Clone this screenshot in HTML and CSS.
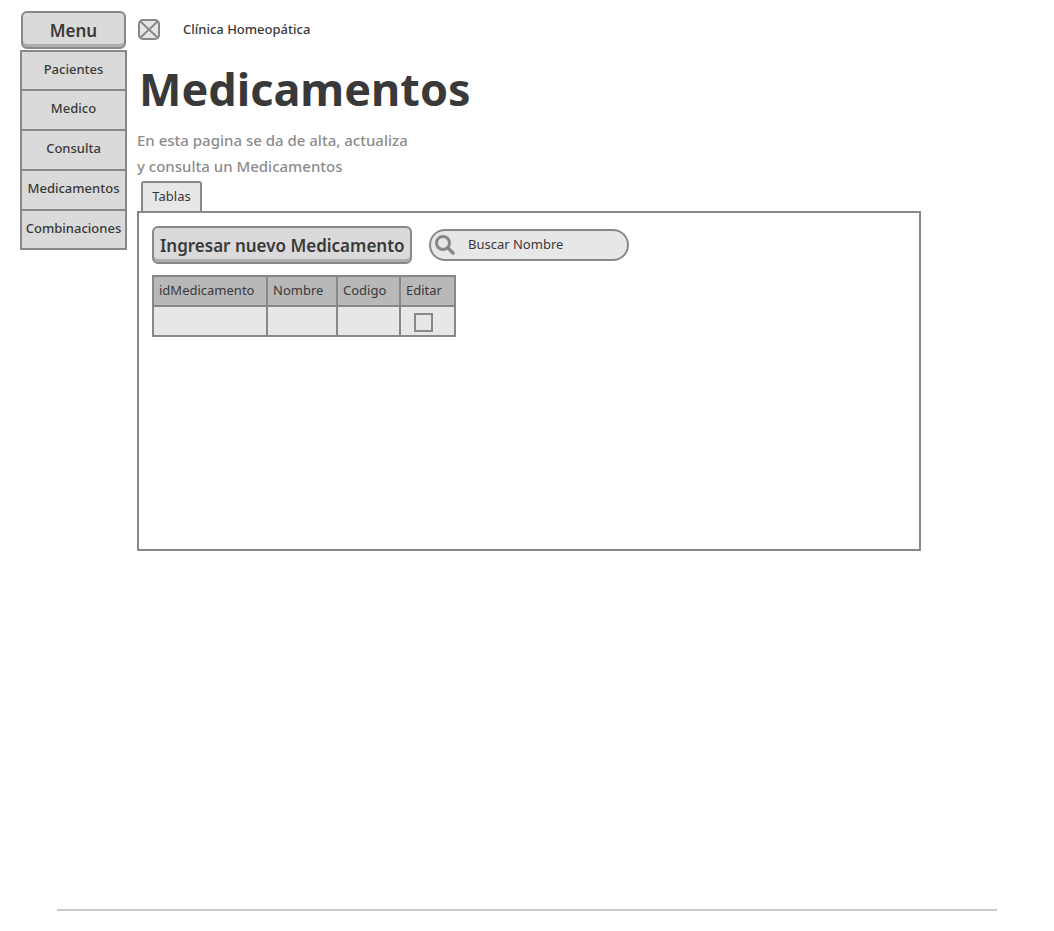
FILE: index.html
```html
<!DOCTYPE html>
<html lang="es">
<head>
<meta charset="utf-8">
<meta name="viewport" content="width=device-width, initial-scale=1">
<title>Clínica Homeopática - Medicamentos</title>
<link rel="stylesheet" href="styles.css">
</head>
<body>
<div class="layout">
  <aside class="sidebar">
    <button type="button" class="button menu-button">Menu</button>
    <nav class="nav" aria-label="Menu">
      <a href="#pacientes">Pacientes</a>
      <a href="#medico">Medico</a>
      <a href="#consulta">Consulta</a>
      <a href="#medicamentos">Medicamentos</a>
      <a href="#combinaciones">Combinaciones</a>
    </nav>
  </aside>
  <main class="main">
    <header class="brand">
      <svg class="logo" viewBox="0 0 22 21" aria-hidden="true">
        <rect x="1" y="1" width="20" height="19" rx="4" fill="#e6e6e6" stroke="#888" stroke-width="2"/>
        <path d="M2 2 20 19M20 2 2 19" stroke="#888" stroke-width="2"/>
      </svg>
      <span>Clínica Homeopática</span>
    </header>
    <h1 class="title">Medicamentos</h1>
    <p class="intro">En esta pagina se da de alta, actualiza<br>y consulta un Medicamentos</p>
    <button type="button" class="tab">Tablas</button>
    <section class="panel">
      <div class="toolbar">
        <button type="button" class="button">Ingresar nuevo Medicamento</button>
        <label class="search">
          <svg class="search-icon" viewBox="0 0 20 20" aria-hidden="true">
            <circle cx="8" cy="8" r="6.5" fill="none" stroke="#888" stroke-width="3"/>
            <path d="M13 13 18 18" stroke="#888" stroke-width="3.4" stroke-linecap="round"/>
          </svg>
          <input type="search" placeholder="Buscar Nombre" aria-label="Buscar Nombre">
        </label>
      </div>
      <table class="table">
        <colgroup><col class="col-id"><col class="col-name"><col class="col-code"><col class="col-edit"></colgroup>
        <thead>
          <tr><th scope="col">idMedicamento</th><th scope="col">Nombre</th><th scope="col">Codigo</th><th scope="col">Editar</th></tr>
        </thead>
        <tbody>
          <tr><td></td><td></td><td></td><td><input type="checkbox" class="check" aria-label="Editar"></td></tr>
        </tbody>
      </table>
    </section>
  </main>
</div>
<hr class="rule">
</body>
</html>
```
FILE: styles.css
```css
* {
  box-sizing: border-box;
}

body {
  margin: 0;
  min-height: 100vh;
  display: flex;
  flex-direction: column;
  justify-content: space-between;
  background: #fff;
  color: #393939;
  font-family: "Noto Sans", "Open Sans", sans-serif;
  font-size: 13px;
}

button,
input {
  font: inherit;
  color: inherit;
}

.layout {
  display: grid;
  grid-template-columns: 107px minmax(0, 1fr);
  gap: 10px;
  padding: 11px 133px 0 20px;
}

.sidebar {
  display: flex;
  flex-direction: column;
  gap: 1px;
}

.button {
  height: 38px;
  padding: 0 6px;
  border: 2px solid #888;
  border-radius: 6px;
  background: #dadada;
  box-shadow: inset 0 -3px #adadad;
  font-size: 17px;
  font-weight: 600;
  white-space: nowrap;
}

.menu-button {
  margin: 0 1px;
}

.nav {
  display: grid;
  gap: 2px;
  padding: 2px;
  background: #888;
}

.nav a {
  height: 38px;
  background: #dadada;
  color: inherit;
  font-weight: 500;
  line-height: 35px;
  text-align: center;
  text-decoration: none;
}

.nav a:first-child,
.nav a:last-child {
  height: 37px;
}

.brand {
  display: flex;
  align-items: center;
  gap: 23px;
  height: 37px;
  padding-left: 1px;
  font-weight: 500;
}

.brand span {
  padding-bottom: 2px;
}

.logo {
  width: 22px;
  height: 21px;
}

.title {
  margin: 8px 0 0 2px;
  font-size: 45px;
  font-weight: 700;
  line-height: 66px;
}

.intro {
  margin: 5px 0 2px;
  color: #8c8c8c;
  font-size: 15px;
  font-weight: 500;
  line-height: 26px;
}

.tab {
  display: block;
  width: 61px;
  height: 30px;
  margin-left: 4px;
  padding: 0 0 2px;
  border: 2px solid #888;
  border-bottom: 0;
  border-radius: 3px 3px 0 0;
  background: #e7e7e7;
}

.panel {
  min-height: 340px;
  padding: 13px;
  border: 2px solid #888;
}

.toolbar {
  display: flex;
  align-items: center;
  gap: 17px;
  margin-bottom: 11px;
}

.toolbar .button {
  width: 260px;
}

.search {
  display: flex;
  align-items: center;
  gap: 13px;
  width: 200px;
  height: 32px;
  padding: 0 12px 0 4px;
  border: 2px solid #888;
  border-radius: 16px;
  background: #e7e7e7;
}

.search-icon {
  flex: none;
  width: 20px;
  height: 20px;
}

.search input {
  min-width: 0;
  flex: 1;
  padding: 0 0 2px;
  border: 0;
  outline: 0;
  background: transparent;
}

.search input::placeholder {
  color: #393939;
  opacity: 1;
}

.table {
  width: 304px;
  table-layout: fixed;
  border-collapse: collapse;
}

.col-id {
  width: 114px;
}

.col-name {
  width: 70px;
}

.col-code {
  width: 63px;
}

.col-edit {
  width: 55px;
}

.table th,
.table td {
  height: 30px;
  padding: 0 0 0 5px;
  border: 2px solid #888;
  background: #e7e7e7;
  text-align: left;
}

.table th {
  padding-bottom: 2px;
  background: #b8b8b8;
  font-weight: 400;
}

.check {
  display: block;
  width: 19px;
  height: 19px;
  margin: 2px 0 0 8px;
  appearance: none;
  border: 2px solid #888;
}

.rule {
  width: auto;
  height: 2px;
  margin: 24px 57px 20px;
  border: 0;
  background: #cacaca;
}
```
